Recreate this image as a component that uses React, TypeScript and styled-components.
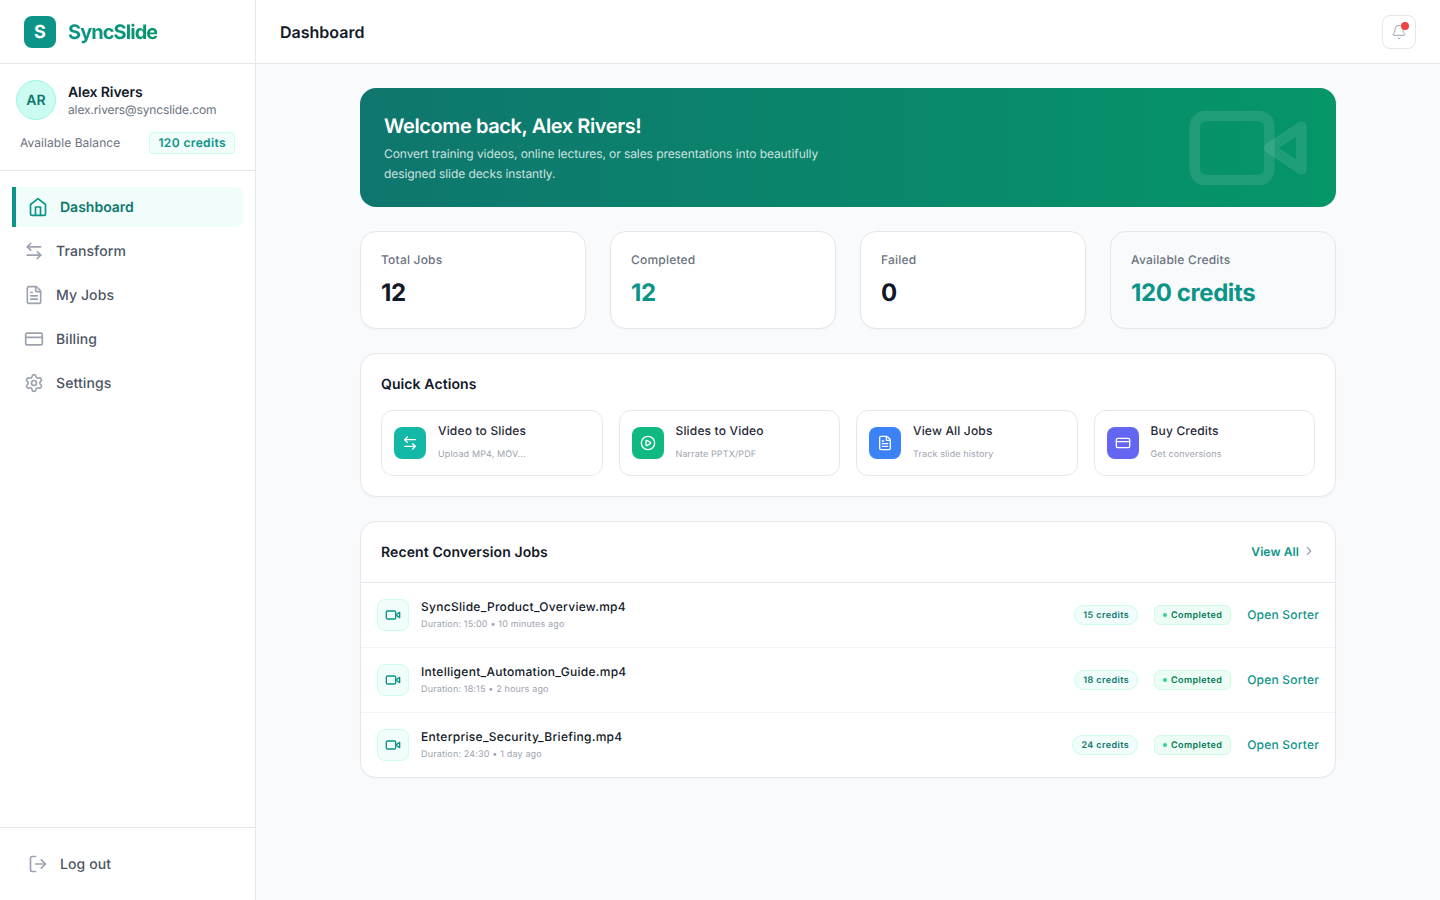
import React from 'react';
import styled, { createGlobalStyle } from 'styled-components';
import {
  ArrowLeftRight,
  Bell,
  ChevronRight,
  CirclePlay,
  CreditCard,
  FileText,
  LogOut,
  Settings,
} from 'lucide-react';

const GlobalStyle = createGlobalStyle`
  * { box-sizing: border-box; }
  html, body { margin: 0; padding: 0; height: 100%; }
  body {
    font-family: "Inter", "Liberation Sans", sans-serif;
    background: #f8fafc;
    color: #111827;
    text-rendering: geometricPrecision;
  }
`;

const VideoGlyph = ({ size, strokeWidth }: { size: number; strokeWidth: number }) => (
  <svg width={size} height={size} viewBox="0 0 24 24" fill="none" stroke="currentColor" strokeWidth={strokeWidth} strokeLinecap="round" strokeLinejoin="round">
    <path d="m22 8-6 4 6 4V8Z" />
    <rect x="2" y="6" width="14" height="12" rx="2" ry="2" />
  </svg>
);

const HomeGlyph = ({ size, strokeWidth }: { size: number; strokeWidth: number }) => (
  <svg width={size} height={size} viewBox="0 0 24 24" fill="none" stroke="currentColor" strokeWidth={strokeWidth} strokeLinecap="round" strokeLinejoin="round">
    <path d="m3 9 9-7 9 7v11a2 2 0 0 1-2 2H5a2 2 0 0 1-2-2z" />
    <polyline points="9 22 9 12 15 12 15 22" />
  </svg>
);

const navItems = [
  { label: 'Dashboard', icon: HomeGlyph, active: true },
  { label: 'Transform', icon: ArrowLeftRight, active: false },
  { label: 'My Jobs', icon: FileText, active: false },
  { label: 'Billing', icon: CreditCard, active: false },
  { label: 'Settings', icon: Settings, active: false },
];

const stats = [
  { label: 'Total Jobs', value: '12', tone: 'plain', muted: false },
  { label: 'Completed', value: '12', tone: 'teal', muted: false },
  { label: 'Failed', value: '0', tone: 'plain', muted: false },
  { label: 'Available Credits', value: '120 credits', tone: 'teal', muted: true },
];

const actions = [
  { title: 'Video to Slides', sub: 'Upload MP4, MOV...', color: '#14b8a6', icon: ArrowLeftRight },
  { title: 'Slides to Video', sub: 'Narrate PPTX/PDF', color: '#10b981', icon: CirclePlay },
  { title: 'View All Jobs', sub: 'Track slide history', color: '#3b82f6', icon: FileText },
  { title: 'Buy Credits', sub: 'Get conversions', color: '#6366f1', icon: CreditCard },
];

const jobs = [
  { name: 'SyncSlide_Product_Overview.mp4', meta: 'Duration: 15:00 • 10 minutes ago', credits: '15 credits' },
  { name: 'Intelligent_Automation_Guide.mp4', meta: 'Duration: 18:15 • 2 hours ago', credits: '18 credits' },
  { name: 'Enterprise_Security_Briefing.mp4', meta: 'Duration: 24:30 • 1 day ago', credits: '24 credits' },
];

const App: React.FC = () => {
  return (
    <Shell>
      <GlobalStyle />
      <Sidebar>
        <BrandBar>
          <LogoMark>S</LogoMark>
          <BrandName>SyncSlide</BrandName>
        </BrandBar>
        <UserPanel>
          <UserRow>
            <Avatar>AR</Avatar>
            <div>
              <UserName>Alex Rivers</UserName>
              <UserMail>alex.rivers@syncslide.com</UserMail>
            </div>
          </UserRow>
          <BalanceRow>
            <BalanceLabel>Available Balance</BalanceLabel>
            <BalancePill>120 credits</BalancePill>
          </BalanceRow>
        </UserPanel>
        <Nav>
          {navItems.map((item) => (
            <NavItem key={item.label} $active={item.active}>
              <item.icon size={20} strokeWidth={2} />
              {item.label}
            </NavItem>
          ))}
        </Nav>
        <SidebarFoot>
          <LogoutItem>
            <LogOut size={20} strokeWidth={2} />
            Log out
          </LogoutItem>
        </SidebarFoot>
      </Sidebar>

      <Main>
        <TopBar>
          <PageTitle>Dashboard</PageTitle>
          <BellButton>
            <Bell size={16} strokeWidth={1.5} />
            <BellDot />
          </BellButton>
        </TopBar>
        <Content>
          <Banner>
            <BannerTitle>Welcome back, Alex Rivers!</BannerTitle>
            <BannerText>
              Convert training videos, online lectures, or sales presentations into beautifully designed slide decks
              instantly.
            </BannerText>
            <BannerIcon>
              <VideoGlyph size={128} strokeWidth={2} />
            </BannerIcon>
          </Banner>

          <StatGrid>
            {stats.map((stat) => (
              <StatCard key={stat.label} $muted={stat.muted}>
                <StatLabel>{stat.label}</StatLabel>
                <StatValue $tone={stat.tone}>{stat.value}</StatValue>
              </StatCard>
            ))}
          </StatGrid>

          <QuickCard>
            <SectionTitle>Quick Actions</SectionTitle>
            <ActionGrid>
              {actions.map((action) => (
                <ActionCard key={action.title}>
                  <ActionIcon $color={action.color}>
                    <action.icon size={16} strokeWidth={2} />
                  </ActionIcon>
                  <ActionText>
                    <ActionTitle>{action.title}</ActionTitle>
                    <ActionSub>{action.sub}</ActionSub>
                  </ActionText>
                </ActionCard>
              ))}
            </ActionGrid>
          </QuickCard>

          <JobsCard>
            <JobsHeader>
              <SectionTitle>Recent Conversion Jobs</SectionTitle>
              <ViewAll>
                View All
                <ChevronRight size={14} strokeWidth={2} />
              </ViewAll>
            </JobsHeader>
            {jobs.map((job) => (
              <JobRow key={job.name}>
                <JobIcon>
                  <VideoGlyph size={16} strokeWidth={2} />
                </JobIcon>
                <JobInfo>
                  <JobName>{job.name}</JobName>
                  <JobMeta>{job.meta}</JobMeta>
                </JobInfo>
                <CreditTag>{job.credits}</CreditTag>
                <StatusTag>
                  <StatusDot />
                  Completed
                </StatusTag>
                <SorterLink>Open Sorter</SorterLink>
              </JobRow>
            ))}
          </JobsCard>
        </Content>
      </Main>
    </Shell>
  );
};

export default App;

const Shell = styled.div`
  display: flex;
  width: 100%;
  height: 100vh;
  overflow: hidden;
`;

const Sidebar = styled.aside`
  width: 256px;
  flex-shrink: 0;
  display: flex;
  flex-direction: column;
  background: #fff;
  border-right: 1px solid #e5e7eb;
`;

const BrandBar = styled.div`
  height: 64px;
  display: flex;
  align-items: center;
  gap: 12px;
  padding: 0 24px;
  border-bottom: 1px solid #e5e7eb;
`;

const LogoMark = styled.div`
  width: 32px;
  height: 32px;
  padding-top: 1px;
  border-radius: 8px;
  background: #0d9488;
  color: #fff;
  display: flex;
  align-items: center;
  justify-content: center;
  font-size: 18px;
  font-weight: 700;
`;

const BrandName = styled.span`
  font-size: 20px;
  font-weight: 700;
  letter-spacing: -0.95px;
  background: linear-gradient(90deg, #0d9488, #059669);
  -webkit-background-clip: text;
  background-clip: text;
  color: transparent;
`;

const UserPanel = styled.div`
  height: 107px;
  padding: 16px;
  border-bottom: 1px solid #e5e7eb;
`;

const UserRow = styled.div`
  display: flex;
  align-items: center;
  gap: 12px;
`;

const Avatar = styled.div`
  width: 40px;
  height: 40px;
  border-radius: 50%;
  background: #ccfbf1;
  border: 1px solid #99f6e4;
  color: #0f766e;
  display: flex;
  align-items: center;
  justify-content: center;
  font-size: 14px;
  font-weight: 600;
`;

const UserName = styled.div`
  padding-top: 1px;
  margin-bottom: -1px;
  font-size: 14px;
  line-height: 20px;
  font-weight: 600;
  letter-spacing: -0.1px;
  color: #111827;
`;

const UserMail = styled.div`
  font-size: 12px;
  line-height: 16px;
  letter-spacing: -0.12px;
  color: #6b7280;
`;

const BalanceRow = styled.div`
  display: flex;
  align-items: center;
  justify-content: space-between;
  margin-top: 12px;
  padding: 0 4px;
`;

const BalanceLabel = styled.span`
  padding-bottom: 2px;
  font-size: 12px;
  letter-spacing: 0.06px;
  color: #6b7280;
`;

const BalancePill = styled.span`
  height: 22px;
  display: flex;
  align-items: center;
  padding: 0 8px 2px;
  border-radius: 4px;
  background: #f0fdfa;
  border: 1px solid #ccfbf1;
  color: #0d9488;
  font-size: 12px;
  font-weight: 600;
  letter-spacing: 0.38px;
`;

const Nav = styled.nav`
  flex: 1;
  display: flex;
  flex-direction: column;
  gap: 4px;
  padding: 16px 12px;
`;

const NavItem = styled.a<{ $active: boolean }>`
  height: 40px;
  display: flex;
  align-items: center;
  gap: 12px;
  padding: 0 12px;
  border-radius: ${(p) => (p.$active ? '0 8px 8px 0' : '8px')};
  border-left: ${(p) => (p.$active ? '4px solid #0d9488' : 'none')};
  background: ${(p) => (p.$active ? '#f0fdfa' : 'transparent')};
  color: ${(p) => (p.$active ? '#0f766e' : '#4b5563')};
  font-size: 14px;
  font-weight: ${(p) => (p.$active ? 600 : 500)};
  letter-spacing: ${(p) => (p.$active ? '0' : '0.1px')};

  svg {
    color: ${(p) => (p.$active ? '#0d9488' : '#9ca3af')};
  }
`;

const SidebarFoot = styled.div`
  height: 73px;
  padding: 16px 12px;
  border-top: 1px solid #e5e7eb;
`;

const LogoutItem = styled.a`
  height: 40px;
  display: flex;
  align-items: center;
  gap: 12px;
  padding: 0 16px;
  color: #4b5563;
  font-size: 14px;
  font-weight: 500;
  letter-spacing: 0.1px;

  svg {
    color: #9ca3af;
  }
`;

const Main = styled.main`
  flex: 1;
  min-width: 0;
  display: flex;
  flex-direction: column;
`;

const TopBar = styled.header`
  height: 64px;
  flex-shrink: 0;
  display: flex;
  align-items: center;
  justify-content: space-between;
  padding: 0 24px;
  background: #fff;
  border-bottom: 1px solid #e5e7eb;
`;

const PageTitle = styled.h1`
  margin: 0;
  font-size: 16px;
  font-weight: 600;
  color: #111827;
`;

const BellButton = styled.button`
  position: relative;
  width: 34px;
  height: 34px;
  padding: 0;
  display: flex;
  align-items: center;
  justify-content: center;
  background: #fff;
  border: 1px solid #e5e7eb;
  border-radius: 8px;
  color: #9ca3af;
`;

const BellDot = styled.span`
  position: absolute;
  top: 6px;
  right: 6px;
  width: 8px;
  height: 8px;
  border-radius: 50%;
  background: #ef4444;
`;

const Content = styled.div`
  width: 976px;
  margin: 0 auto;
  padding-top: 24px;
  display: flex;
  flex-direction: column;
  gap: 24px;
`;

const Banner = styled.section`
  position: relative;
  height: 119px;
  padding: 24px;
  border-radius: 16px;
  background: linear-gradient(90deg, #0f766e, #059669);
  color: #fff;
  overflow: hidden;
`;

const BannerTitle = styled.h2`
  margin: 0 0 4px;
  font-size: 20px;
  line-height: 28px;
  font-weight: 600;
  letter-spacing: -0.4px;
`;

const BannerText = styled.p`
  margin: 0;
  max-width: 448px;
  font-size: 12px;
  line-height: 20px;
  letter-spacing: -0.08px;
  color: rgba(255, 255, 255, 0.8);
`;

const BannerIcon = styled.div`
  position: absolute;
  right: 24px;
  top: -4px;
  color: rgba(255, 255, 255, 0.1);
  display: flex;
`;

const StatGrid = styled.div`
  display: grid;
  grid-template-columns: repeat(4, 1fr);
  gap: 24px;
`;

const StatCard = styled.div<{ $muted: boolean }>`
  height: 98px;
  padding: 20px;
  border-radius: 16px;
  background: ${(p) => (p.$muted ? '#f8fafc' : '#fff')};
  border: 1px solid #e5e7eb;
  box-shadow: 0 1px 2px rgba(0, 0, 0, 0.03);
`;

const StatLabel = styled.div`
  font-size: 12px;
  line-height: 15px;
  font-weight: 500;
  letter-spacing: 0.2px;
  color: #6b7280;
`;

const StatValue = styled.div<{ $tone: string }>`
  margin-top: 10px;
  font-size: 24px;
  line-height: 32px;
  font-weight: 700;
  letter-spacing: -0.4px;
  color: ${(p) => (p.$tone === 'teal' ? '#0d9488' : '#111827')};
`;

const QuickCard = styled.section`
  height: 144px;
  padding: 20px;
  background: #fff;
  border: 1px solid #e5e7eb;
  border-radius: 16px;
  box-shadow: 0 1px 2px rgba(0, 0, 0, 0.03);
`;

const SectionTitle = styled.h3`
  margin: 0 0 -1px;
  padding-top: 1px;
  font-size: 14px;
  line-height: 20px;
  font-weight: 600;
  letter-spacing: 0.1px;
  color: #111827;
`;

const ActionGrid = styled.div`
  display: grid;
  grid-template-columns: repeat(4, 1fr);
  gap: 16px;
  margin-top: 16px;
`;

const ActionCard = styled.div`
  height: 66px;
  display: flex;
  align-items: center;
  gap: 12px;
  padding: 0 12px;
  background: #fff;
  border: 1px solid #e5e7eb;
  border-radius: 12px;
`;

const ActionIcon = styled.div<{ $color: string }>`
  width: 32px;
  height: 32px;
  flex-shrink: 0;
  display: flex;
  align-items: center;
  justify-content: center;
  border-radius: 8px;
  background: ${(p) => p.$color};
  color: #fff;
`;

const ActionText = styled.div`
  padding-bottom: 2px;
`;

const ActionTitle = styled.div`
  font-size: 12px;
  line-height: 16px;
  font-weight: 500;
  letter-spacing: 0.17px;
  color: #1f2937;
`;

const ActionSub = styled.div`
  margin-top: 10px;
  font-size: 9px;
  line-height: 12px;
  letter-spacing: 0.13px;
  color: #9ca3af;
`;

const JobsCard = styled.section`
  background: #fff;
  border: 1px solid #e5e7eb;
  border-radius: 16px;
  box-shadow: 0 1px 2px rgba(0, 0, 0, 0.03);
  overflow: hidden;
`;

const JobsHeader = styled.div`
  height: 61px;
  display: flex;
  align-items: center;
  justify-content: space-between;
  padding: 0 20px;
  border-bottom: 1px solid #e5e7eb;
`;

const ViewAll = styled.a`
  display: flex;
  align-items: center;
  gap: 2px;
  padding-bottom: 2px;
  color: #0d9488;
  font-size: 12px;
  font-weight: 600;
  letter-spacing: 0.1px;

  svg {
    color: #9ca3af;
    margin-right: -1px;
    margin-left: 1px;
  }
`;

const JobRow = styled.div`
  height: 65px;
  display: flex;
  align-items: center;
  padding: 0 16px;
  border-bottom: 1px solid #f3f4f6;

  &:last-child {
    height: 64px;
    border-bottom: none;
  }
`;

const JobIcon = styled.div`
  width: 32px;
  height: 32px;
  display: flex;
  align-items: center;
  justify-content: center;
  border-radius: 8px;
  background: #f0fdfa;
  border: 1px solid #ccfbf1;
  color: #0d9488;
`;

const JobInfo = styled.div`
  flex: 1;
  margin-left: 12px;
  padding-bottom: 1px;
`;

const JobName = styled.div`
  font-size: 12px;
  line-height: 16px;
  font-weight: 500;
  letter-spacing: 0.29px;
  color: #111827;
`;

const JobMeta = styled.div`
  margin-top: 4px;
  font-size: 9px;
  line-height: 12px;
  letter-spacing: 0.16px;
  color: #9ca3af;
`;

const CreditTag = styled.span`
  height: 20px;
  display: flex;
  align-items: center;
  padding: 0 8px;
  border-radius: 999px;
  background: #f0fdfa;
  border: 1px solid #ccfbf1;
  color: #0f766e;
  font-size: 9px;
  font-weight: 600;
  letter-spacing: 0.4px;
`;

const StatusTag = styled.span`
  height: 20px;
  display: flex;
  align-items: center;
  gap: 4px;
  margin-left: 16px;
  padding: 0 8px;
  border-radius: 6px;
  background: #ecfdf5;
  border: 1px solid #d1fae5;
  color: #047857;
  font-size: 9px;
  font-weight: 600;
  letter-spacing: 0.4px;
`;

const StatusDot = styled.span`
  width: 4px;
  height: 4px;
  border-radius: 50%;
  background: #34d399;
`;

const SorterLink = styled.a`
  margin-left: 16px;
  padding-bottom: 2px;
  color: #0d9488;
  font-size: 12px;
  font-weight: 500;
  letter-spacing: 0.2px;
`;
